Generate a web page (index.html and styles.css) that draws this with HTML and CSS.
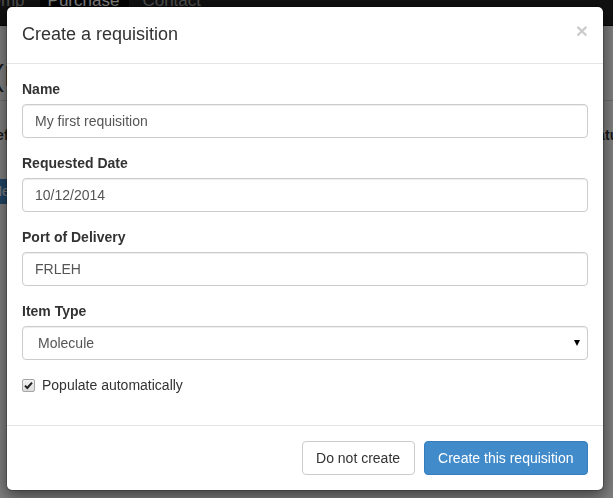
FILE: index.html
```html
<!DOCTYPE html>
<html lang="en">
<head>
<meta charset="utf-8">
<title>Create a requisition</title>
<link rel="stylesheet" href="styles.css">
</head>
<body>
<div class="page">
  <nav class="navbar">
    <a class="nav-link">Temp</a>
    <a class="nav-link active">Purchase</a>
    <a class="nav-link">Contact</a>
  </nav>
  <div class="content">
    <h2 class="page-title">(Requisitions)</h2>
    <div class="table-head">
      <span>Ref</span>
      <span>Status</span>
    </div>
    <div class="toolbar">
      <span class="bg-btn">New</span>
    </div>
  </div>
</div>

<div class="backdrop"></div>

<div class="modal">
  <div class="modal-header">
    <h4 class="modal-title">Create a requisition</h4>
    <button class="close" type="button">&times;</button>
  </div>
  <div class="modal-body">
    <div class="form-group">
      <label class="control-label">Name</label>
      <input class="form-control" type="text" value="My first requisition">
    </div>
    <div class="form-group">
      <label class="control-label">Requested Date</label>
      <input class="form-control" type="text" value="10/12/2014">
    </div>
    <div class="form-group">
      <label class="control-label">Port of Delivery</label>
      <input class="form-control" type="text" value="FRLEH">
    </div>
    <div class="form-group">
      <label class="control-label">Item Type</label>
      <div class="select-wrap">
        <select class="form-control select">
          <option>Molecule</option>
        </select>
      </div>
    </div>
    <div class="form-group check-group">
      <label class="checkbox">
        <span class="cbox">
          <svg viewBox="0 0 13 13" width="13" height="13">
            <path d="M3 6.6 L5.3 9 L10 3.6" fill="none" stroke="#222" stroke-width="2"/>
          </svg>
        </span>
        <span>Populate automatically</span>
      </label>
    </div>
  </div>
  <div class="modal-footer">
    <button class="btn btn-default" type="button">Do not create</button>
    <button class="btn btn-primary" type="button">Create this requisition</button>
  </div>
</div>
</body>
</html>
```

FILE: styles.css
```css
* { box-sizing: border-box; }

html, body {
  margin: 0;
  padding: 0;
  height: 100%;
  overflow: hidden;
}

body {
  font-family: "Liberation Sans", Arial, Helvetica, sans-serif;
  font-size: 14px;
  line-height: 20px;
  color: #333;
  background: #fff;
}

/* ---------- background page ---------- */
.page {
  margin-top: -24px;
}

.navbar {
  display: flex;
  height: 50px;
  background: #222;
  border-bottom: 1px solid #080808;
  margin-left: -25px;
}

.nav-link {
  display: block;
  padding: 15px 8px;
  color: #9d9d9d;
  line-height: 20px;
  font-size: 17px;
}

.nav-link:first-child { padding-right: 15px; }

.nav-link.active {
  background: #080808;
  color: #fff;
  padding: 15px 10px 15px 8px;
  margin-right: 5px;
}

.content {
  margin-left: -14px;
  width: 640px;
  padding-top: 32px;
}

.page-title {
  margin: 0;
  font-size: 30px;
  line-height: 36px;
  font-weight: 500;
  padding-left: 8px;
}

.table-head {
  margin-top: 6px;
  border-top: 1px solid #ddd;
  padding: 24px 0 0 0;
  display: flex;
  justify-content: space-between;
  font-weight: bold;
}

.toolbar {
  margin-top: 34px;
}

.bg-btn {
  display: inline-block;
  background: #428bca;
  color: #fff;
  padding: 3px 12px 3px 6px;
  border-radius: 4px;
  line-height: 19px;
}

.backdrop {
  position: fixed;
  inset: 0;
  background: rgba(0, 0, 0, 0.5);
}

/* ---------- modal ---------- */
.modal {
  position: absolute;
  left: 6px;
  top: 6px;
  width: 598px;
  background: #fff;
  border: 1px solid rgba(0, 0, 0, 0.2);
  border-radius: 6px;
  box-shadow: 0 5px 15px rgba(0, 0, 0, 0.5);
  background-clip: padding-box;
}

.modal-header {
  display: flex;
  justify-content: space-between;
  align-items: flex-start;
  padding: 15px;
  border-bottom: 1px solid #e5e5e5;
  height: 57px;
}

.modal-title {
  margin: 0;
  font-size: 18px;
  font-weight: 500;
  line-height: 1.42857;
  color: #333;
}

.close {
  margin-top: -2px;
  padding: 0;
  border: 0;
  background: transparent;
  font-family: "Liberation Sans", Arial, sans-serif;
  font-size: 21px;
  font-weight: bold;
  line-height: 1;
  color: #000;
  opacity: 0.2;
  text-shadow: 0 1px 0 #fff;
}

.modal-body {
  padding: 15px;
}

.form-group {
  margin-bottom: 15px;
}

.control-label {
  display: block;
  margin-bottom: 5px;
  font-weight: bold;
  line-height: 20px;
}

.form-control {
  display: block;
  width: 100%;
  height: 34px;
  padding: 6px 12px;
  font-family: inherit;
  font-size: 14px;
  line-height: 20px;
  color: #555;
  background: #fff;
  border: 1px solid #ccc;
  border-radius: 4px;
  box-shadow: inset 0 1px 1px rgba(0, 0, 0, 0.075);
  margin: 0;
}

.select-wrap {
  position: relative;
}

.select {
  appearance: none;
  -webkit-appearance: none;
  padding-left: 15px;
}

.select-wrap::after {
  content: "";
  position: absolute;
  right: 8px;
  top: 14px;
  width: 0;
  height: 0;
  border-left: 3.5px solid transparent;
  border-right: 3.5px solid transparent;
  border-top: 6px solid #000;
  pointer-events: none;
}

.checkbox {
  display: flex;
  align-items: flex-start;
  gap: 7px;
  line-height: 20px;
  font-weight: normal;
  min-height: 20px;
}

.cbox {
  display: block;
  width: 13px;
  height: 13px;
  margin-top: 4px;
  border: 1px solid #a6a6a6;
  border-radius: 2px;
  background: linear-gradient(#f2f2f2, #dcdcdc);
  position: relative;
}

.cbox svg {
  position: absolute;
  left: -1px;
  top: -1px;
}

.modal-footer {
  display: flex;
  justify-content: flex-end;
  gap: 9px;
  padding: 15px;
  border-top: 1px solid #e5e5e5;
}

.btn {
  display: inline-block;
  padding: 6px 13.5px;
  font-family: inherit;
  font-size: 14px;
  line-height: 20px;
  border: 1px solid transparent;
  border-radius: 4px;
  margin: 0;
}

.btn-default {
  color: #333;
  background: #fff;
  border-color: #ccc;
}

.btn-primary {
  color: #fff;
  background: #428bca;
  border-color: #357ebd;
}
```
